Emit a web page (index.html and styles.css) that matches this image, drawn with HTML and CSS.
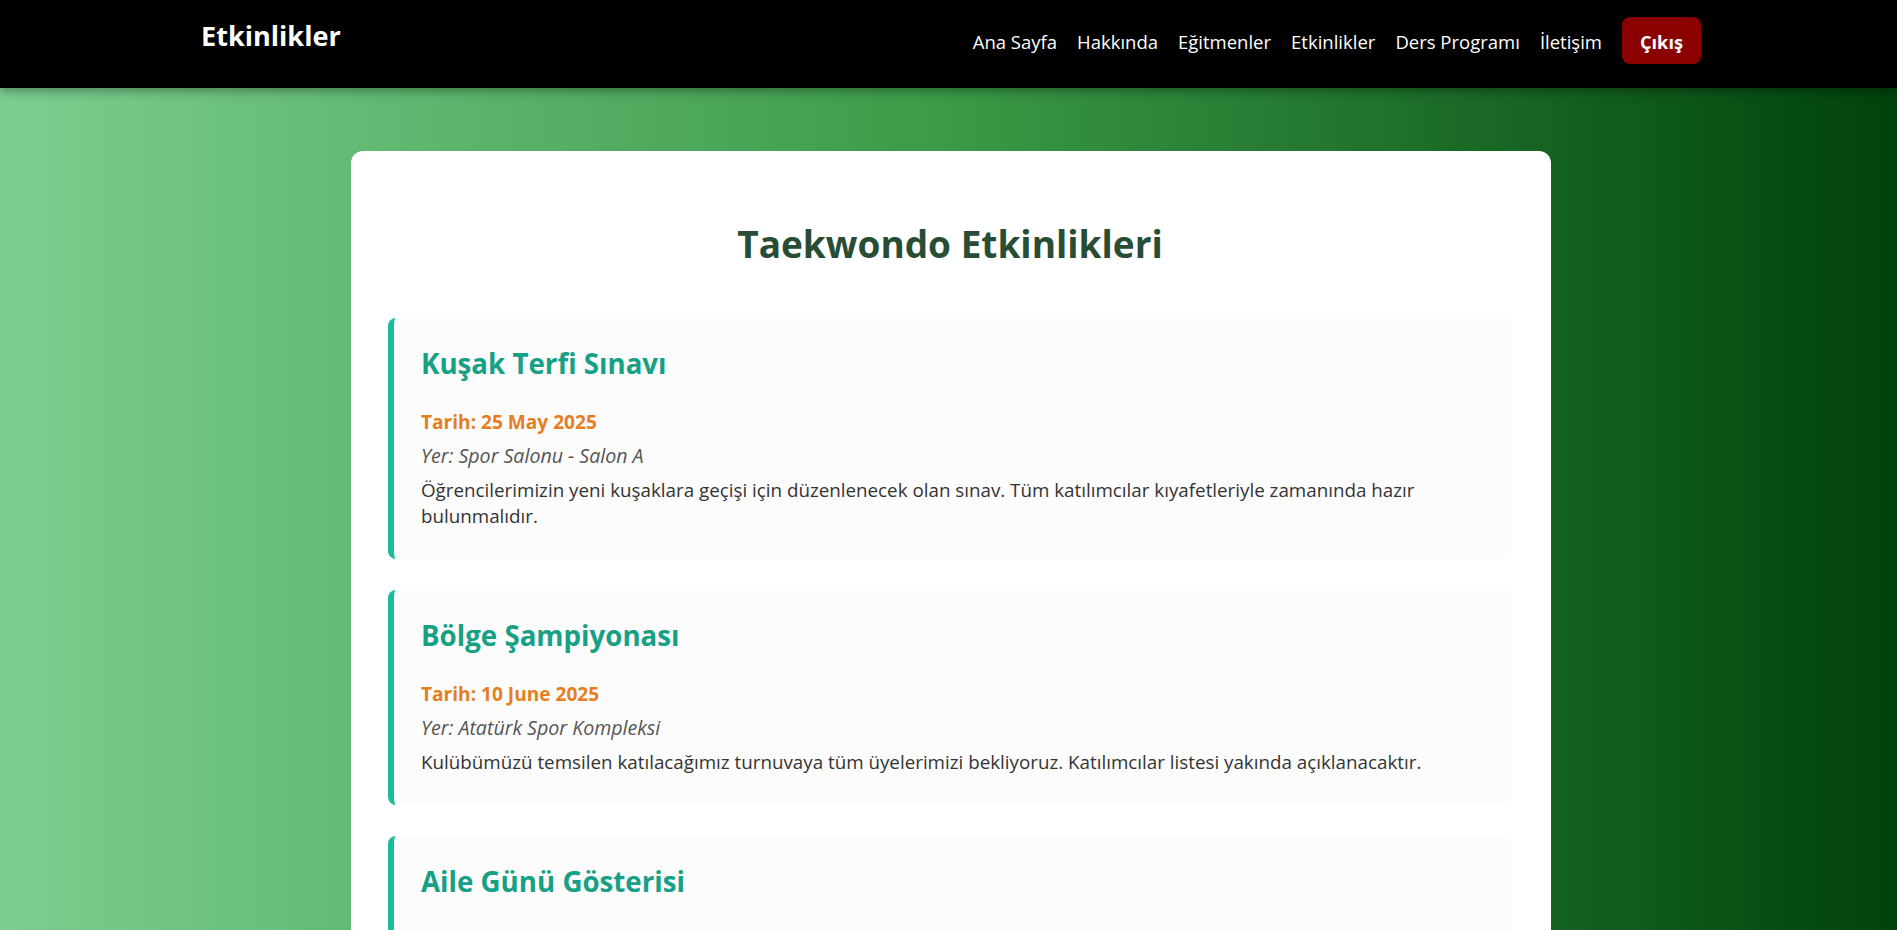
FILE: index.html
```html
<!DOCTYPE html>
<html lang="tr">
<head>
<meta charset="utf-8">
<title>Etkinlikler</title>
<link rel="stylesheet" href="styles.css">
</head>
<body>
<header class="site-header">
  <div class="header-inner">
    <div class="logo">Etkinlikler</div>
    <nav class="nav">
      <a class="nav-link" href="#">Ana Sayfa</a>
      <a class="nav-link" href="#">Hakkında</a>
      <a class="nav-link" href="#">Eğitmenler</a>
      <a class="nav-link" href="#">Etkinlikler</a>
      <a class="nav-link" href="#">Ders Programı</a>
      <a class="nav-link" href="#">İletişim</a>
      <a class="logout" href="#">Çıkış</a>
    </nav>
  </div>
</header>

<div class="page">
  <main class="container">
    <h1 class="page-title">Taekwondo Etkinlikleri</h1>

    <section class="event">
      <h2 class="event-title">Kuşak Terfi Sınavı</h2>
      <p class="event-date">Tarih: 25 May 2025</p>
      <p class="event-place">Yer: Spor Salonu - Salon A</p>
      <p class="event-desc">Öğrencilerimizin yeni kuşaklara geçişi için düzenlenecek olan sınav. Tüm katılımcılar kıyafetleriyle zamanında hazır bulunmalıdır.</p>
    </section>

    <section class="event">
      <h2 class="event-title">Bölge Şampiyonası</h2>
      <p class="event-date">Tarih: 10 June 2025</p>
      <p class="event-place">Yer: Atatürk Spor Kompleksi</p>
      <p class="event-desc">Kulübümüzü temsilen katılacağımız turnuvaya tüm üyelerimizi bekliyoruz. Katılımcılar listesi yakında açıklanacaktır.</p>
    </section>

    <section class="event">
      <h2 class="event-title">Aile Günü Gösterisi</h2>
      <p class="event-date">Tarih: 22 June 2025</p>
      <p class="event-place">Yer: Spor Salonu - Salon B</p>
      <p class="event-desc">Öğrencilerimizin ailelerine yönelik gösteri ve eğlenceli etkinlikler düzenlenecektir.</p>
    </section>
  </main>
</div>
</body>
</html>
```
FILE: styles.css
```css
* { box-sizing: border-box; }

body {
  margin: 0;
  font-family: "Open Sans", "Noto Sans", sans-serif;
  color: #333;
  background: linear-gradient(to right, #7dcd90 0%, #3a9a47 50%, #00420c 100%);
  min-height: 100vh;
}

.site-header {
  background: #000;
  height: 88px;
  box-shadow: 0 3px 10px rgba(0, 0, 0, 0.35);
  position: relative;
  z-index: 1;
}

.header-inner {
  max-width: 1505px;
  margin: 0 auto;
  padding-left: 5px;
  display: flex;
  justify-content: space-between;
  align-items: flex-start;
}

.logo {
  color: #fff;
  font-weight: 700;
  font-size: 27.1px;
  line-height: 40px;
  margin-top: 16px;
}

.nav {
  display: flex;
  align-items: baseline;
  gap: 20px;
  margin-top: 17px;
}

.nav-link {
  color: #fff;
  text-decoration: none;
  font-size: 18.5px;
  line-height: 26px;
}

.logout {
  display: block;
  background: #8b0000;
  color: #fff;
  text-decoration: none;
  font-weight: 700;
  font-size: 18.2px;
  line-height: 26px;
  padding: 12px 18px 9px;
  border-radius: 8px;
}

.page {
  padding-left: 5px;
}

.container {
  max-width: 1200px;
  margin: 63px auto 0;
  background: #fff;
  border-radius: 12px;
  padding: 40px 39px 40px 37px;
}

.page-title {
  margin: 29px 0 50px;
  text-align: center;
  font-size: 37px;
  line-height: 48px;
  font-weight: 700;
  color: #284d34;
}

.event {
  background: #fcfcfc;
  border-left: 6px solid #1abc9c;
  border-radius: 8px;
  padding: 27px 27px 30px;
  margin-bottom: 31px;
}

.event-title {
  margin: 0;
  font-size: 27.7px;
  line-height: 36px;
  font-weight: 700;
  color: #16a085;
}

.event-date {
  margin: 27px 0 0;
  font-size: 19.1px;
  line-height: 28px;
  font-weight: 700;
  color: #e67e22;
}

.event-place {
  margin: 6px 0 0;
  font-size: 19.6px;
  line-height: 28px;
  font-style: italic;
  color: #555;
}

.event-desc {
  margin: 7px 0 0;
  font-size: 18.8px;
  line-height: 26px;
  color: #333;
}
```
